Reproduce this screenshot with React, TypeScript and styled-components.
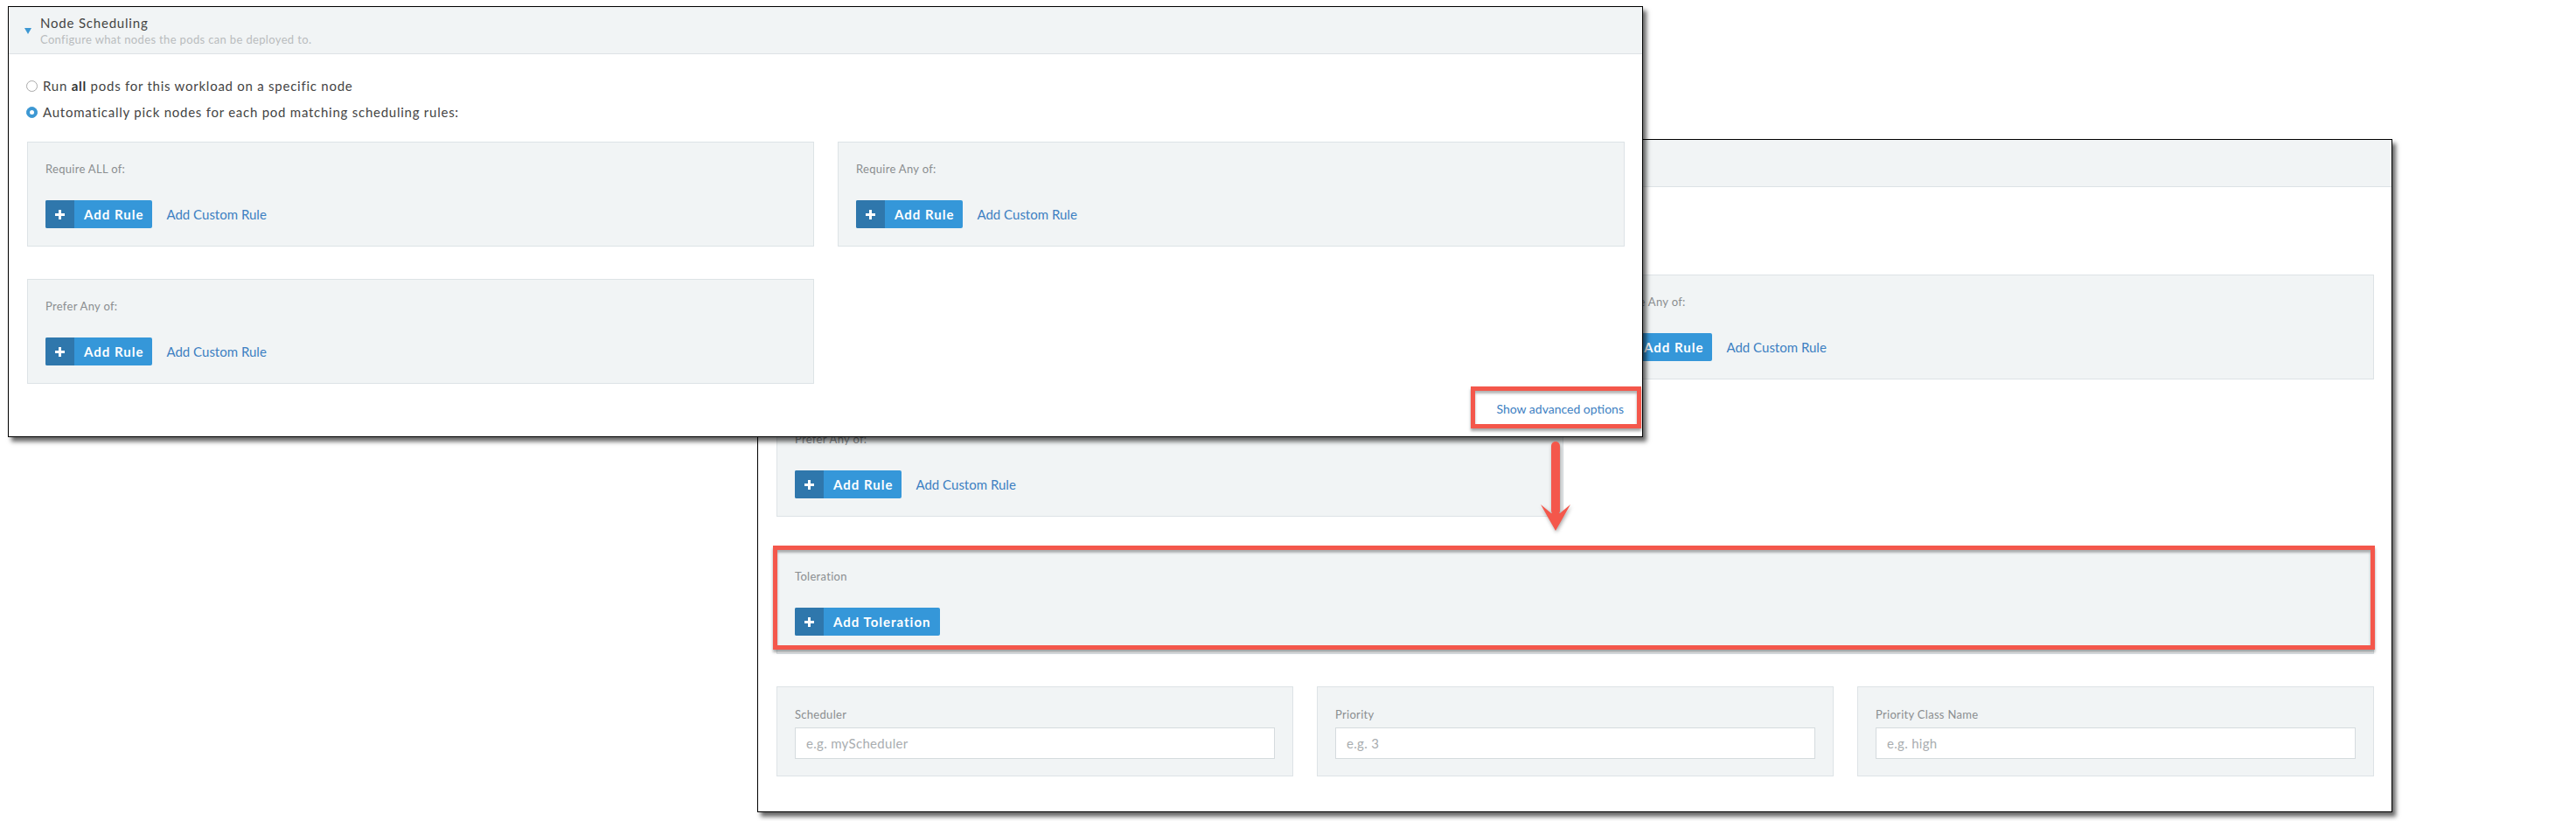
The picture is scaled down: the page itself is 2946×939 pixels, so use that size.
import React from "react";
import styled, { createGlobalStyle } from "styled-components";

const GlobalStyle = createGlobalStyle`
  html, body {
    margin: 0;
    padding: 0;
    background: #ffffff;
    width: 2946px;
    height: 939px;
    overflow: hidden;
  }
  body {
    font-family: Lato, "Open Sans", "Liberation Sans", sans-serif;
    color: #333333;
  }
  * { box-sizing: border-box; }
`;

const Canvas = styled.div`
  position: relative;
  width: 2946px;
  height: 939px;
  background: #ffffff;
`;

const Window = styled.section<{ $left: number; $top: number; $z: number }>`
  position: absolute;
  left: ${(p) => p.$left}px;
  top: ${(p) => p.$top}px;
  z-index: ${(p) => p.$z};
  width: 1870px;
  background: #ffffff;
  border: 1px solid #000000;
  box-shadow: 4px 5px 5px rgba(0, 0, 0, 0.6);
`;

const Header = styled.header<{ $covered?: boolean }>`
  display: flex;
  align-items: center;
  gap: 10px;
  height: 54px;
  padding: 0 20px 0 18px;
  background: #f1f4f5;
  border-bottom: 1px solid #dde2e5;
  & > * {
    visibility: ${(p) => (p.$covered ? "hidden" : "visible")};
  }
`;

const Caret = styled.span`
  width: 0;
  height: 0;
  border-left: 4px solid transparent;
  border-right: 4px solid transparent;
  border-top: 7px solid #3d98d3;
  margin-top: 2px;
`;

const HeaderText = styled.div`
  display: flex;
  flex-direction: column;
`;

const Title = styled.div`
  font-size: 15px;
  line-height: 20px;
  letter-spacing: 0.8px;
  color: #444444;
`;

const Subtitle = styled.div`
  font-size: 13px;
  line-height: 18px;
  letter-spacing: 0.35px;
  color: #b9bcbe;
`;

const Body = styled.div<{ $bottom: number }>`
  padding: 21px 20px ${(p) => p.$bottom}px 21px;
`;

const RadioGroup = styled.div<{ $covered?: boolean }>`
  display: flex;
  flex-direction: column;
  visibility: ${(p) => (p.$covered ? "hidden" : "visible")};
`;

const RadioRow = styled.label`
  display: flex;
  align-items: center;
  gap: 6px;
  height: 30px;
  font-size: 15px;
  font-weight: 400;
  letter-spacing: 0.75px;
  color: #444444;
`;

const RadioDot = styled.span<{ $checked?: boolean }>`
  position: relative;
  flex: none;
  width: 13px;
  height: 13px;
  margin-left: -1px;
  border-radius: 50%;
  border: 1px solid ${(p) => (p.$checked ? "#3d98d3" : "#a9a9a9")};
  background: ${(p) => (p.$checked ? "#3d98d3" : "#ffffff")};
  &::after {
    content: "";
    display: ${(p) => (p.$checked ? "block" : "none")};
    position: absolute;
    left: 50%;
    top: 50%;
    width: 5px;
    height: 5px;
    margin: -2.5px 0 0 -2.5px;
    border-radius: 50%;
    background: #ffffff;
  }
`;

const Strong = styled.b`
  font-weight: 700;
  color: #333333;
`;

const RuleGrid = styled.div`
  display: grid;
  grid-template-columns: 1fr 1fr;
  column-gap: 27px;
  row-gap: 37px;
  margin-top: 19px;
`;

const GrayBox = styled.div`
  background: #f1f4f5;
  border: 1px solid #dde3e6;
`;

const RuleBox = styled(GrayBox)`
  height: 120px;
  padding: 22px 20px 20px 20px;
`;

const BoxLabel = styled.div`
  font-size: 13px;
  line-height: 16px;
  letter-spacing: 0.3px;
  color: #8b8e90;
`;

const Actions = styled.div`
  display: flex;
  align-items: center;
  gap: 16px;
  margin-top: 28px;
`;

const AddButton = styled.button`
  display: inline-flex;
  align-items: stretch;
  height: 32px;
  padding: 0;
  border: none;
  border-radius: 2px;
  overflow: hidden;
  background: #3597d9;
  color: #ffffff;
  font-family: Lato, "Open Sans", "Liberation Sans", sans-serif;
  font-size: 15px;
  font-weight: 700;
  letter-spacing: 1px;
  cursor: pointer;
`;

const PlusPart = styled.span`
  display: flex;
  align-items: center;
  justify-content: center;
  width: 33px;
  background: #2f77ac;
`;

const ButtonText = styled.span`
  display: flex;
  align-items: center;
  padding: 0 10px 0 11px;
`;

const LinkText = styled.a<{ $size?: number }>`
  font-size: ${(p) => p.$size ?? 15}px;
  line-height: 18px;
  color: #3d80c2;
  text-decoration: none;
  cursor: pointer;
`;

const Footer = styled.div`
  display: flex;
  justify-content: flex-end;
  margin-top: 20px;
  padding-right: 1px;
`;

const TolerationSection = styled(RuleBox)`
  margin-top: 37px;
`;

const FieldGrid = styled.div`
  display: grid;
  grid-template-columns: repeat(3, 1fr);
  column-gap: 27px;
  margin-top: 37px;
`;

const FieldBox = styled(GrayBox)`
  height: 103px;
  padding: 23px 20px 19px 20px;
`;

const FieldInput = styled.input`
  display: block;
  width: 100%;
  height: 36px;
  margin-top: 7px;
  padding: 0 12px;
  border: 1px solid #d5dbde;
  background: #ffffff;
  font-family: Lato, "Open Sans", "Liberation Sans", sans-serif;
  font-size: 15px;
  letter-spacing: 0.3px;
  color: #333333;
  outline: none;
  &::placeholder {
    color: #a9adb0;
  }
`;

const Highlight = styled.div<{ $left: number; $top: number; $w: number; $h: number }>`
  position: absolute;
  z-index: 5;
  left: ${(p) => p.$left}px;
  top: ${(p) => p.$top}px;
  width: ${(p) => p.$w}px;
  height: ${(p) => p.$h}px;
  border: 5px solid #f4574b;
  box-shadow: 0 3px 3px rgba(0, 0, 0, 0.35), inset 0 3px 3px rgba(0, 0, 0, 0.3);
  pointer-events: none;
`;

const ArrowMark = styled.svg`
  position: absolute;
  z-index: 6;
  left: 1755px;
  top: 500px;
  overflow: visible;
  filter: drop-shadow(1px 2px 2px rgba(0, 0, 0, 0.35));
`;

const PlusIcon = () => (
  <svg width="11" height="11" viewBox="0 0 11 11" aria-hidden="true">
    <rect x="4" y="0" width="3" height="11" fill="#ffffff" />
    <rect x="0" y="4" width="11" height="3" fill="#ffffff" />
  </svg>
);

const AddRuleBlock = ({ label }: { label: string }) => (
  <RuleBox>
    <BoxLabel>{label}</BoxLabel>
    <Actions>
      <AddButton type="button">
        <PlusPart>
          <PlusIcon />
        </PlusPart>
        <ButtonText>Add Rule</ButtonText>
      </AddButton>
      <LinkText>Add Custom Rule</LinkText>
    </Actions>
  </RuleBox>
);

const SchedulingHeader = ({ covered }: { covered?: boolean }) => (
  <Header $covered={covered}>
    <Caret />
    <HeaderText>
      <Title>Node Scheduling</Title>
      <Subtitle>Configure what nodes the pods can be deployed to.</Subtitle>
    </HeaderText>
  </Header>
);

const Radios = ({ covered }: { covered?: boolean }) => (
  <RadioGroup $covered={covered}>
    <RadioRow>
      <RadioDot />
      <span>
        Run <Strong>all</Strong> pods for this workload on a specific node
      </span>
    </RadioRow>
    <RadioRow>
      <RadioDot $checked />
      <span>Automatically pick nodes for each pod matching scheduling rules:</span>
    </RadioRow>
  </RadioGroup>
);

const Rules = () => (
  <RuleGrid>
    <AddRuleBlock label="Require ALL of:" />
    <AddRuleBlock label="Require Any of:" />
    <AddRuleBlock label="Prefer Any of:" />
  </RuleGrid>
);

const fields = [
  { label: "Scheduler", placeholder: "e.g. myScheduler" },
  { label: "Priority", placeholder: "e.g. 3" },
  { label: "Priority Class Name", placeholder: "e.g. high" },
];

export default function App() {
  return (
    <>
      <GlobalStyle />
      <Canvas>
        <Window $left={866} $top={159} $z={1}>
          <SchedulingHeader covered />
          <Body $bottom={40}>
            <Radios covered />
            <Rules />
            <TolerationSection>
              <BoxLabel>Toleration</BoxLabel>
              <Actions>
                <AddButton type="button">
                  <PlusPart>
                    <PlusIcon />
                  </PlusPart>
                  <ButtonText>Add Toleration</ButtonText>
                </AddButton>
              </Actions>
            </TolerationSection>
            <FieldGrid>
              {fields.map((f) => (
                <FieldBox key={f.label}>
                  <BoxLabel>{f.label}</BoxLabel>
                  <FieldInput placeholder={f.placeholder} readOnly />
                </FieldBox>
              ))}
            </FieldGrid>
          </Body>
        </Window>

        <Window $left={9} $top={7} $z={2}>
          <SchedulingHeader />
          <Body $bottom={22}>
            <Radios />
            <Rules />
            <Footer>
              <LinkText $size={14}>Show advanced options</LinkText>
            </Footer>
          </Body>
        </Window>

        <Highlight $left={1682} $top={442} $w={195} $h={48} />
        <Highlight $left={884} $top={624} $w={1832} $h={119} />

        <ArrowMark width="50" height="112" viewBox="0 0 50 112" aria-hidden="true">
          <rect x="19" y="5" width="10" height="84" rx="5" fill="#f4574b" />
          <polygon points="7,77 24,107 41,77 29,87 19,87" fill="#f4574b" />
        </ArrowMark>
      </Canvas>
    </>
  );
}
